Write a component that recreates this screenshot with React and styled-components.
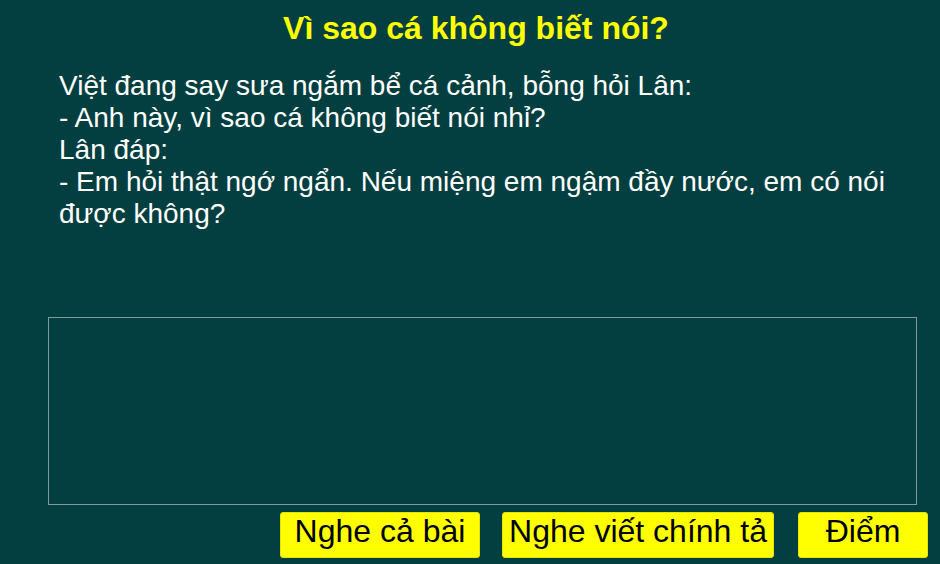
import React from "react";
import styled, { createGlobalStyle } from "styled-components";

const Global = createGlobalStyle`
  html, body { margin: 0; padding: 0; background: #033f40; }
  body { font-family: "Liberation Sans", Arial, sans-serif; }
`;

const Page = styled.div`
  width: 940px;
  height: 564px;
  box-sizing: border-box;
  background: #033f40;
  display: flex;
  flex-direction: column;
  overflow: hidden;
`;

const Title = styled.h1`
  margin: 0;
  padding: 8px 0 0 12px;
  height: 40px;
  text-align: center;
  color: #ffff00;
  font-size: 32px;
  line-height: 40px;
  font-weight: bold;
`;

const Story = styled.div`
  margin: 22px 0 0 59px;
  width: 850px;
  color: #ffffff;
  font-size: 28px;
  line-height: 32px;
`;

const Line = styled.div``;

const AnswerBox = styled.div`
  margin: auto 0 0 48px;
  width: 869px;
  height: 188px;
  box-sizing: border-box;
  border: 1px solid #7f9b9b;
`;

const Toolbar = styled.div`
  display: flex;
  margin: 7px 0 6px 280px;
  height: 46px;
`;

const Button = styled.button`
  width: ${(p) => p.$w}px;
  margin-left: ${(p) => p.$gap || 0}px;
  height: 46px;
  box-sizing: border-box;
  padding: 0 0 8px;
  border: 1px solid #e6e600;
  border-radius: 3px;
  background: #ffff00;
  color: #000;
  font-family: "Liberation Sans", Arial, sans-serif;
  font-size: 32px;
  line-height: 36px;
  text-align: center;
  white-space: nowrap;
  cursor: pointer;
`;

export default function App() {
  return (
    <Page>
      <Global />
      <Title>Vì sao cá không biết nói?</Title>
      <Story>
        <Line>Việt đang say sưa ngắm bể cá cảnh, bỗng hỏi Lân:</Line>
        <Line>- Anh này, vì sao cá không biết nói nhỉ?</Line>
        <Line>Lân đáp:</Line>
        <Line>- Em hỏi thật ngớ ngẩn. Nếu miệng em ngậm đầy nước, em có nói được không?</Line>
      </Story>
      <AnswerBox />
      <Toolbar>
        <Button $w={200}>Nghe cả bài</Button>
        <Button $w={272} $gap={22}>Nghe viết chính tả</Button>
        <Button $w={130} $gap={24}>Điểm</Button>
      </Toolbar>
    </Page>
  );
}
